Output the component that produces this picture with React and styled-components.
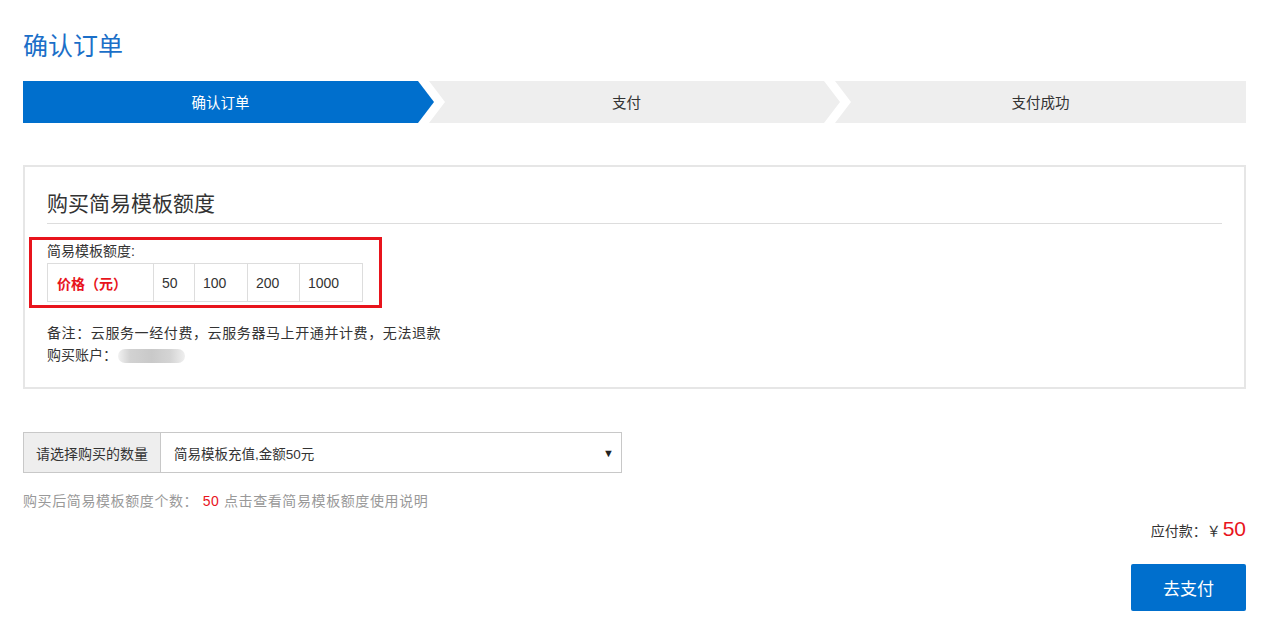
import React from 'react'
import styled, { createGlobalStyle } from 'styled-components'

const Global = createGlobalStyle`
	body {
		margin: 0;
		background: #fff;
		font-family: "Liberation Sans", "Noto Sans CJK SC", sans-serif;
		color: #333;
		font-size: 14px;
	}
`

const Page = styled.div`
	padding: 30px 27px 28px 23px;
`

const Title = styled.h1`
	margin: 0;
	font-size: 25px;
	font-weight: normal;
	line-height: 32px;
	color: #1b6fc8;
`

const Steps = styled.div`
	display: flex;
	margin-top: 19px;
	height: 42px;
`

const Step = styled.div`
	flex: 0 0 calc((100% + 10px) / 3);
	display: flex;
	align-items: center;
	justify-content: center;
	font-size: 14.5px;
	padding-bottom: 2px;
	box-sizing: border-box;
	background: ${p => p.$active ? '#006fcd' : '#eeeeee'};
	color: ${p => p.$active ? '#fff' : '#333'};
	padding-right: ${p => p.$last ? 0 : 16}px;
	& + & {
		margin-left: -5px;
	}
	clip-path: ${p => p.$first
		? 'polygon(0 0, calc(100% - 16px) 0, 100% 50%, calc(100% - 16px) 100%, 0 100%)'
		: p.$last
			? 'polygon(0 0, 100% 0, 100% 100%, 0 100%, 16px 50%)'
			: 'polygon(0 0, calc(100% - 16px) 0, 100% 50%, calc(100% - 16px) 100%, 0 100%, 16px 50%)'};
`

const Card = styled.section`
	margin-top: 42px;
	border: 2px solid #e6e6e6;
	padding: 23px 22px 21px;
`

const CardTitle = styled.h2`
	margin: 0;
	font-size: 21px;
	font-weight: normal;
	line-height: 28px;
	padding-bottom: 5px;
	border-bottom: 1px solid #dddddd;
	color: #333;
`

const Highlight = styled.div`
	margin: 13px 0 0 -18px;
	width: 353px;
	box-sizing: border-box;
	border: 3px solid #e8141c;
	padding: 2px 0 3px 15px;
`

const Label = styled.div`
	font-size: 14px;
	line-height: 18px;
`

const PriceTable = styled.div`
	display: flex;
	margin-top: 3px;
	width: fit-content;
	border: 1px solid #dddddd;
`

const Cell = styled.div`
	width: ${p => p.$w}px;
	height: 37px;
	display: flex;
	align-items: center;
	padding-left: ${p => p.$head ? 9 : 8}px;
	box-sizing: border-box;
	font-size: 14px;
	color: ${p => p.$head ? '#e8141c' : '#333'};
	font-weight: ${p => p.$head ? 'bold' : 'normal'};
	& + & {
		border-left: 1px solid #dddddd;
	}
`

const Notes = styled.div`
	margin-top: 14px;
	font-size: 14px;
	line-height: 22px;
`

const Remark = styled.div`
	letter-spacing: 0.6px;
`

const Masked = styled.span`
	display: inline-block;
	vertical-align: middle;
	width: 67px;
	height: 14px;
	margin-left: 1px;
	border-radius: 7px;
	background: linear-gradient(90deg, #f1f1f1 0%, #d2d2d2 18%, #c9c9c9 50%, #d4d4d4 78%, #efefef 100%);
`

const SelectGroup = styled.div`
	display: flex;
	margin-top: 43px;
	width: 599px;
	height: 41px;
	border: 1px solid #c8c8c8;
	box-sizing: border-box;
`

const SelectLabel = styled.div`
	width: 136px;
	display: flex;
	align-items: center;
	justify-content: center;
	background: #eeeeee;
	border-right: 1px solid #c8c8c8;
	font-size: 14px;
	color: #333;
`

const SelectBox = styled.div`
	flex: 1;
	display: flex;
	align-items: center;
	justify-content: space-between;
	padding: 0 7px 0 13px;
	font-size: 13.5px;
	color: #333;
`

const Caret = styled.span`
	font-size: 11px;
	color: #222;
`

const Hint = styled.p`
	margin: 18px 0 0;
	font-size: 14px;
	line-height: 20px;
	letter-spacing: 0.6px;
	color: #999;
	em {
		font-style: normal;
		color: #e8141c;
	}
`

const Total = styled.div`
	margin-top: 6px;
	display: flex;
	justify-content: flex-end;
	align-items: baseline;
	font-size: 14px;
	line-height: 24px;
	color: #333;
	strong {
		font-weight: normal;
		font-size: 21px;
		color: #e8141c;
		margin-left: 2px;
	}
`

const Actions = styled.div`
	display: flex;
	justify-content: flex-end;
	margin-top: 21px;
`

const PayButton = styled.button`
	width: 115px;
	height: 47px;
	border: none;
	border-radius: 2px;
	background: #006fcd;
	color: #fff;
	font-family: inherit;
	font-size: 17px;
	cursor: pointer;
`

const prices = [
	{ label: '50', w: 41 },
	{ label: '100', w: 53 },
	{ label: '200', w: 52 },
	{ label: '1000', w: 63 },
]

export default function App() {
	return <Page>
		<Global />
		<Title>确认订单</Title>
		<Steps>
			<Step $active $first>确认订单</Step>
			<Step>支付</Step>
			<Step $last>支付成功</Step>
		</Steps>

		<Card>
			<CardTitle>购买简易模板额度</CardTitle>
			<Highlight>
				<Label>简易模板额度:</Label>
				<PriceTable>
					<Cell $head $w={105}>价格（元）</Cell>
					{prices.map(p => <Cell key={p.label} $w={p.w}>{p.label}</Cell>)}
				</PriceTable>
			</Highlight>
			<Notes>
				<Remark>备注：云服务一经付费，云服务器马上开通并计费，无法退款</Remark>
				<div>购买账户：<Masked /></div>
			</Notes>
		</Card>

		<SelectGroup>
			<SelectLabel>请选择购买的数量</SelectLabel>
			<SelectBox>
				<span>简易模板充值,金额50元</span>
				<Caret>▼</Caret>
			</SelectBox>
		</SelectGroup>

		<Hint>购买后简易模板额度个数： <em>50</em> 点击查看简易模板额度使用说明</Hint>

		<Total>应付款：￥<strong>50</strong></Total>
		<Actions>
			<PayButton>去支付</PayButton>
		</Actions>
	</Page>
}
